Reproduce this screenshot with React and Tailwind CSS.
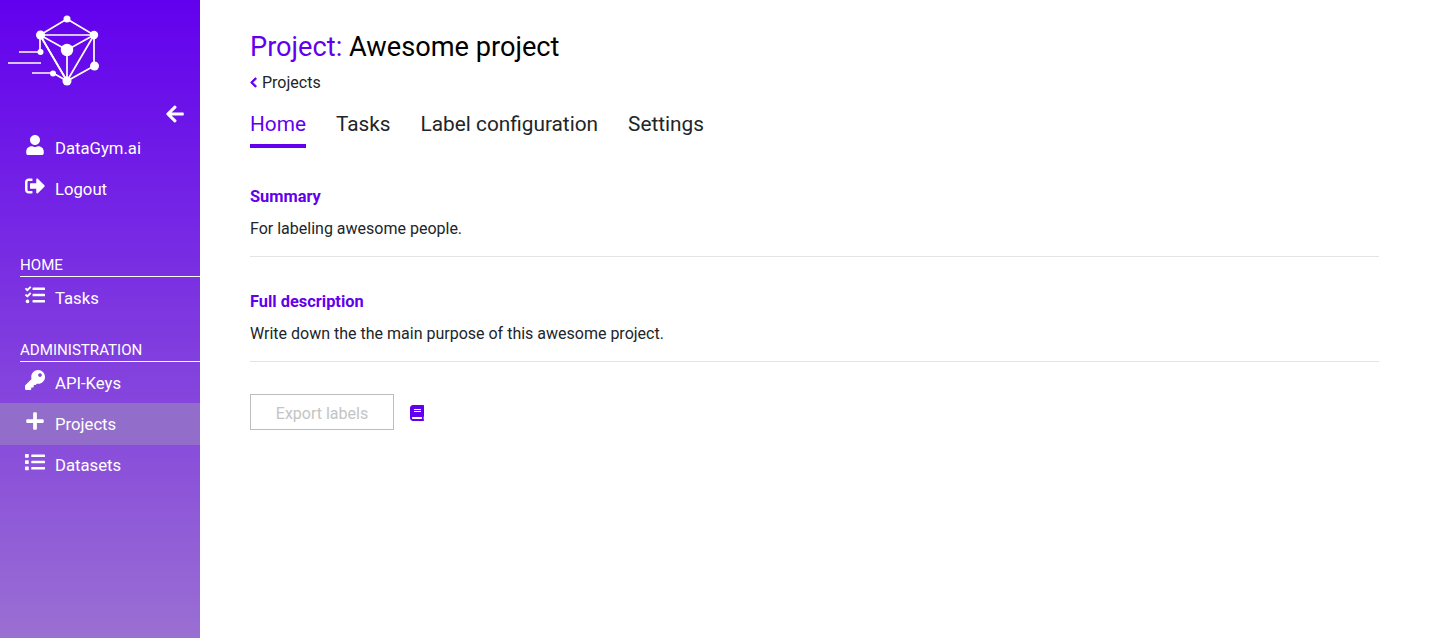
import { FaArrowLeft, FaBook, FaChevronLeft, FaKey, FaList, FaPlus, FaSignOutAlt, FaTasks, FaUser } from 'react-icons/fa';

const Logo = () => (
  <svg width="100" height="88" viewBox="0 0 100 88" className="block" fill="none" stroke="white" strokeWidth="1.7">
    <path d="M67 19 L94 35 L94 66 L67 81 L40 35 Z" />
    <path d="M40 35 H94 M40 35 L67 50 L94 35 M67 50 V81 M40 35 L67 81 L94 35 M40 35 V52 M67 81 L53 73" />
    <path d="M19 52 H40 M8 63 H41 M32 73 H53" />
    <g fill="white" stroke="none">
      <circle cx="67" cy="19" r="3.5" />
      <circle cx="40.500" cy="35" r="4.500" />
      <circle cx="94" cy="35" r="4.200" />
      <circle cx="67" cy="50" r="6.200" />
      <circle cx="40.500" cy="52" r="3" />
      <circle cx="94.500" cy="66" r="4.500" />
      <circle cx="53" cy="73.500" r="3" />
      <circle cx="67" cy="81" r="4.500" />
    </g>
  </svg>
);

const NavItem = ({ icon: Icon, label, size = 20, active = false }) => (
  <div className={`flex items-center pl-[25px] text-white ${active ? 'h-[42px] -mt-px pt-px bg-[#926dc9]' : 'h-[41px]'}`}>
    <span className="w-[30px] flex -mt-[7px]">
      <Icon size={size} />
    </span>
    <span className="text-[16.7px]">{label}</span>
  </div>
);

const SectionLabel = ({ children }) => (
  <div className="ml-5 mb-px border-b border-white text-white text-[15.1px] leading-[17px] pb-[2px] uppercase">{children}</div>
);

const Tab = ({ children, active = false }) => (
  <div className={`h-[37px] text-[20.8px] leading-[26px] border-b-4 ${active ? 'text-[#6200ee] border-[#6200ee]' : 'text-[#212529] border-transparent'}`}>
    {children}
  </div>
);

const Section = ({ title, text }) => (
  <div className="border-b border-[#e4e4e4] pb-[18px]">
    <h3 className="text-[16.4px] font-bold leading-[19px] text-[#6200ee] mb-[13px]">{title}</h3>
    <p className="text-base leading-[19px] text-[#212529]">{text}</p>
  </div>
);

export default function App() {
  return (
    <div className="flex h-screen bg-white font-['Roboto',sans-serif]">
      <aside className="w-[200px] shrink-0 bg-linear-to-b/srgb from-[#6200ee] to-[#9a6fd2]">
        <div className="h-[93px]">
          <Logo />
        </div>
        <div className="flex justify-end pr-[15px] pt-[11px] h-[35px] text-white">
          <FaArrowLeft size={20} />
        </div>
        <NavItem icon={FaUser} label="DataGym.ai" />
        <NavItem icon={FaSignOutAlt} label="Logout" />
        <div className="h-[47px]" />
        <SectionLabel>Home</SectionLabel>
        <NavItem icon={FaTasks} label="Tasks" />
        <div className="h-[23px]" />
        <SectionLabel>Administration</SectionLabel>
        <NavItem icon={FaKey} label="API-Keys" />
        <NavItem icon={FaPlus} label="Projects" active />
        <NavItem icon={FaList} label="Datasets" />
      </aside>
      <main className="flex-1 pl-[50px] pr-[50px] pt-[31px]">
        <h1 className="text-[27.2px] leading-[32px] text-black">
          <span className="text-[#6200ee]">Project:</span> Awesome project
        </h1>
        <div className="flex items-center mt-[10px] h-[19px] text-base text-[#212529]">
          <FaChevronLeft size={11} stroke="currentColor" strokeWidth={40} className="text-[#6200ee] mr-[3px] -ml-[2px]" />
          Projects
        </div>
        <nav className="flex gap-[30px] mt-[19px]">
          <Tab active>Home</Tab>
          <Tab>Tasks</Tab>
          <Tab>Label configuration</Tab>
          <Tab>Settings</Tab>
        </nav>
        <div className="mt-[39px] flex flex-col gap-[35px]">
          <Section title="Summary" text="For labeling awesome people." />
          <Section title="Full description" text="Write down the the main purpose of this awesome project." />
        </div>
        <div className="flex items-center mt-8">
          <button className="w-[144px] h-[36px] pt-1 border border-[#bdbdbd] text-base text-[#c4c4c4]">Export labels</button>
          <FaBook size={16} className="ml-[15px] mt-[2px] text-[#6200ee]" />
        </div>
      </main>
    </div>
  );
}
